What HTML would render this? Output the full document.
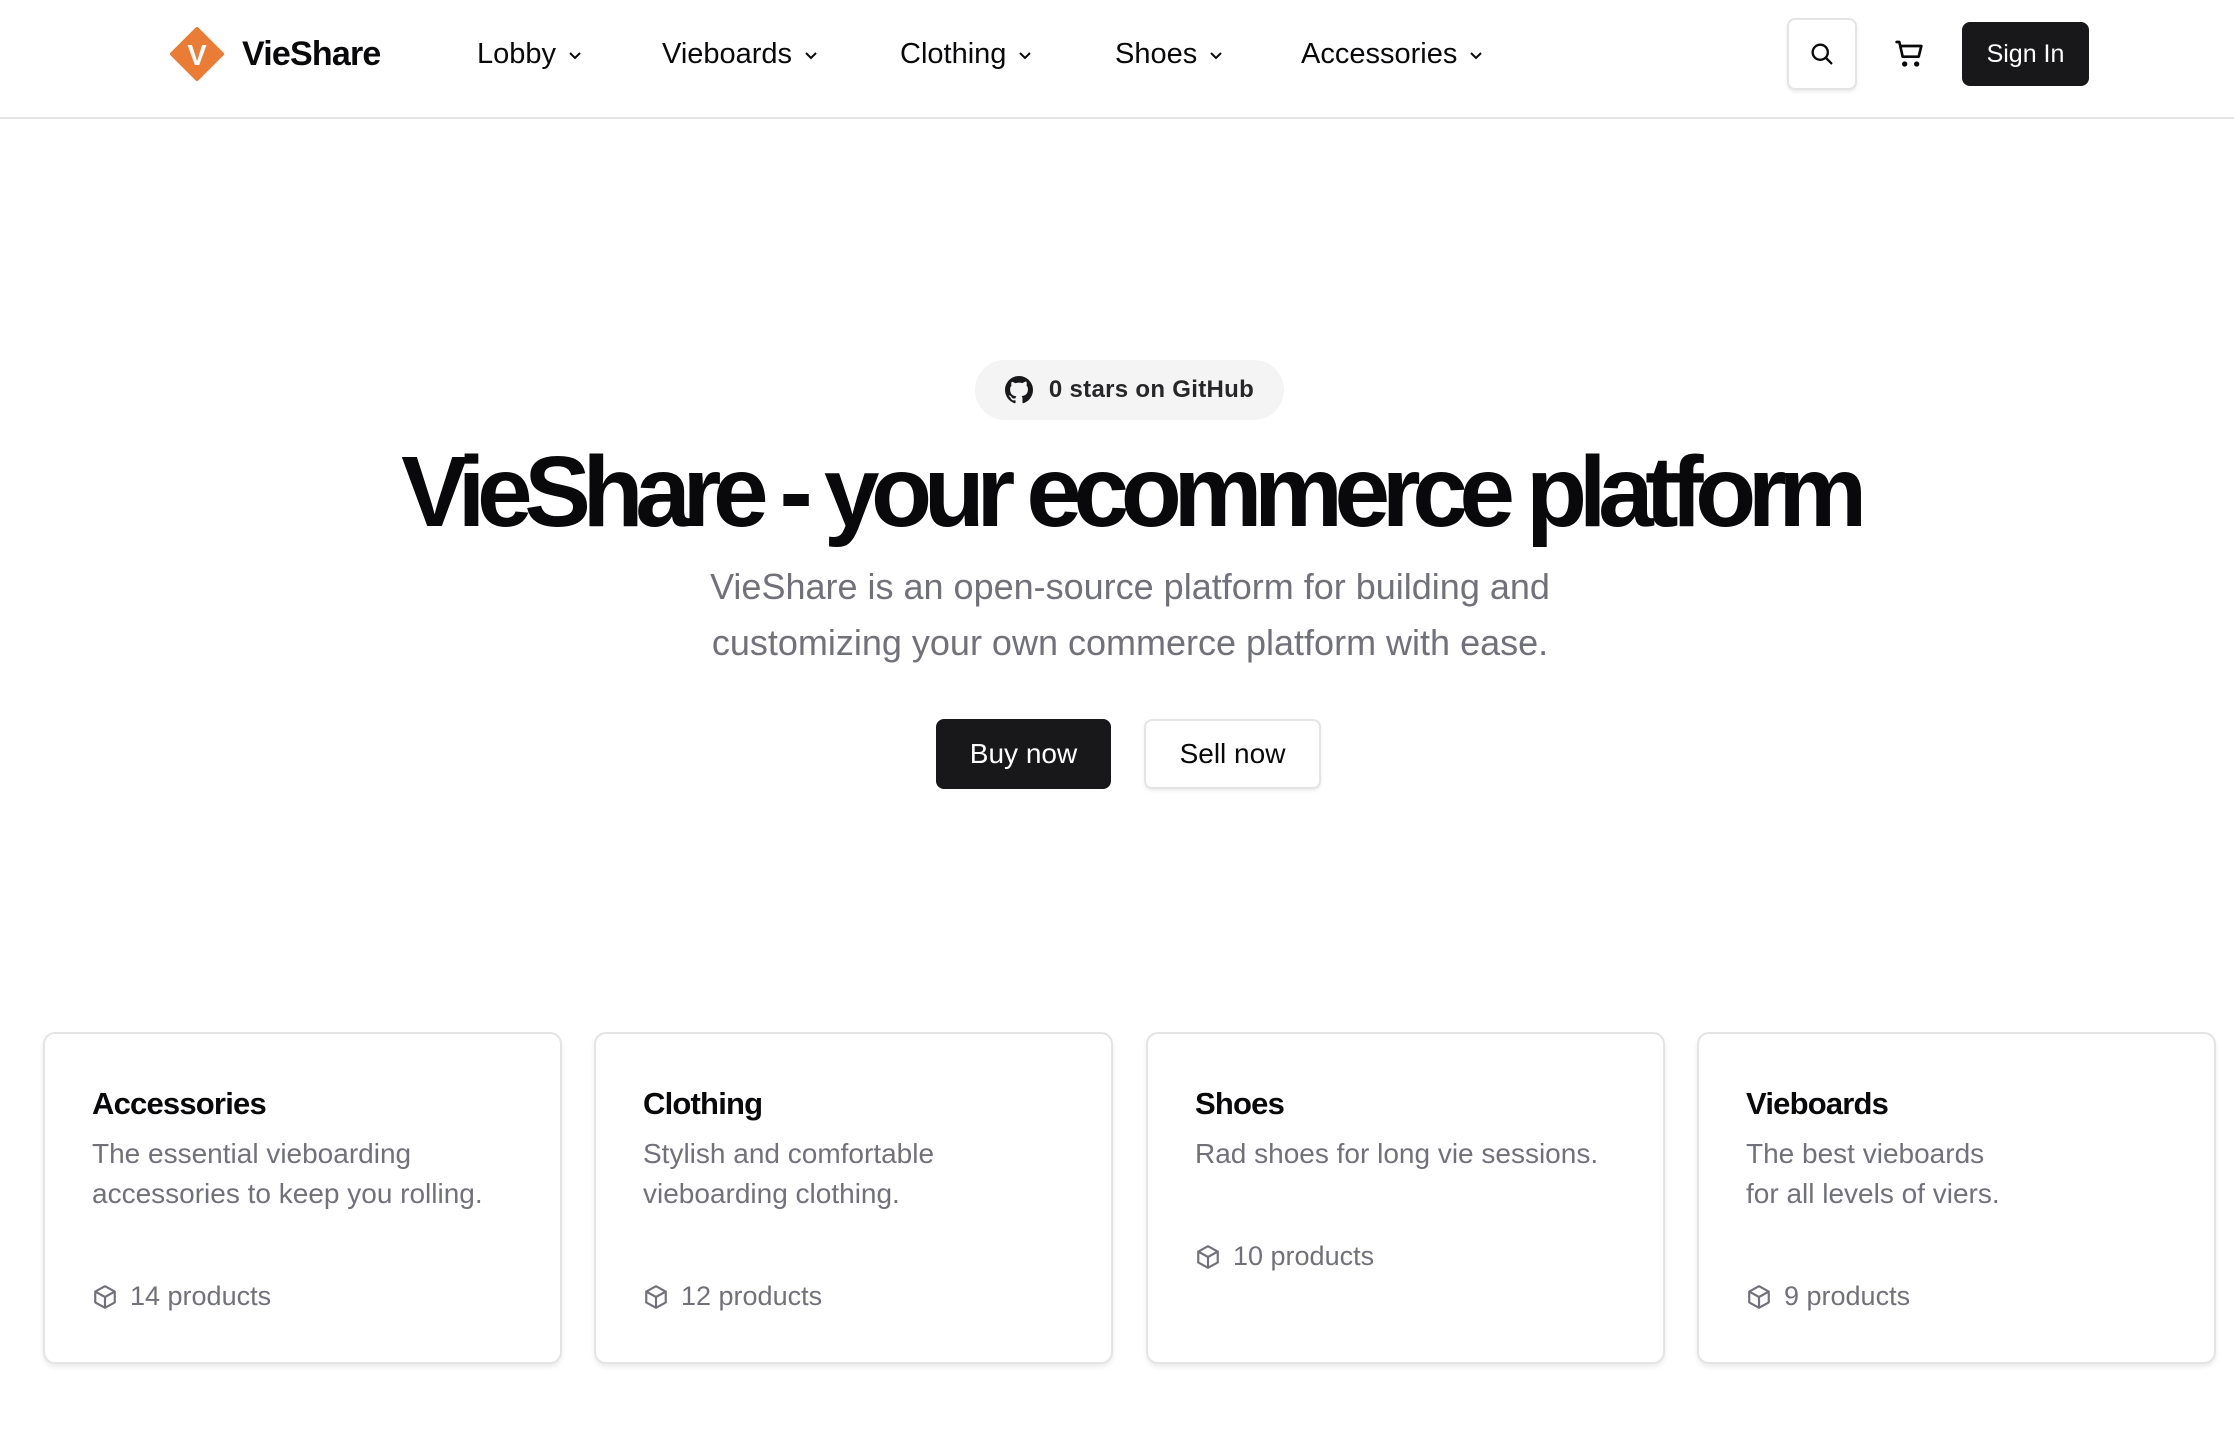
<!DOCTYPE html>
<html><head><meta charset="utf-8"><style>
*{box-sizing:border-box;margin:0;padding:0}
html,body{width:2234px;height:1454px;overflow:hidden;background:#fff;font-family:"Liberation Sans",Arial,sans-serif;color:#09090b}
.a{position:absolute}
.nav{font-size:29px;color:#09090b;top:38px}
.nav svg{margin-left:12px;vertical-align:middle}
.card{position:absolute;top:1032px;width:519px;height:332px;border:2px solid #e4e4e7;border-radius:12px;box-shadow:0 3px 5px rgba(0,0,0,.08);background:#fff}
.card h3{position:absolute;left:47px;top:52px;font-size:31px;font-weight:600;letter-spacing:-0.8px}
.card p{position:absolute;left:47px;top:100px;font-size:28px;line-height:40px;color:#71717a;width:450px}
.card .pr{position:absolute;left:47px;font-size:27px;color:#71717a;display:flex;align-items:center}
.card .pr svg{margin-right:12px}
</style></head><body>
<div class="a" style="left:0;top:117px;width:2234px;height:2px;background:#e4e4e7"></div>
<svg class="a" style="left:170px;top:27px" width="54" height="54" viewBox="0 0 54 54"><path d="M27 2 L52 27 L27 52 L2 27 Z" fill="#ea7c35" stroke="#ea7c35" stroke-width="4" stroke-linejoin="round"/><text x="27" y="38" font-family="Liberation Sans" font-weight="700" font-size="29" fill="#fff" text-anchor="middle">V</text></svg>
<div class="a" style="left:242px;top:35px;font-size:34px;font-weight:700;letter-spacing:-0.8px">VieShare</div>
<div class="a nav" style="left:477px">Lobby<svg width="14" height="10" viewBox="0 0 14 10"><path d="M2 3l5 5 5-5" fill="none" stroke="#09090b" stroke-width="2"/></svg></div>
<div class="a nav" style="left:662px">Vieboards<svg width="14" height="10" viewBox="0 0 14 10"><path d="M2 3l5 5 5-5" fill="none" stroke="#09090b" stroke-width="2"/></svg></div>
<div class="a nav" style="left:900px">Clothing<svg width="14" height="10" viewBox="0 0 14 10"><path d="M2 3l5 5 5-5" fill="none" stroke="#09090b" stroke-width="2"/></svg></div>
<div class="a nav" style="left:1115px">Shoes<svg width="14" height="10" viewBox="0 0 14 10"><path d="M2 3l5 5 5-5" fill="none" stroke="#09090b" stroke-width="2"/></svg></div>
<div class="a nav" style="left:1301px">Accessories<svg width="14" height="10" viewBox="0 0 14 10"><path d="M2 3l5 5 5-5" fill="none" stroke="#09090b" stroke-width="2"/></svg></div>
<div class="a" style="left:1787px;top:18px;width:70px;height:72px;border:2px solid #e4e4e7;border-radius:8px;box-shadow:0 2px 3px rgba(0,0,0,.08);display:flex;align-items:center;justify-content:center"><svg width="28" height="28" viewBox="0 0 24 24" fill="none" stroke="#09090b" stroke-width="2" stroke-linecap="round"><circle cx="10.5" cy="10.5" r="6.5"/><path d="M15.5 15.5L20 20"/></svg></div>
<svg class="a" style="left:1894px;top:38px" width="32" height="32" viewBox="0 0 24 24" fill="none" stroke="#09090b" stroke-width="2" stroke-linecap="round" stroke-linejoin="round"><path d="M2 3h2l2.5 11h12l2-8H5.5"/><circle cx="8" cy="19.5" r="1"/><circle cx="17" cy="19.5" r="1"/></svg>
<div class="a" style="left:1962px;top:22px;width:127px;height:64px;background:#18181b;border-radius:8px;color:#fff;font-size:25px;display:flex;align-items:center;justify-content:center">Sign In</div>

<div class="a" style="left:975px;top:360px;width:309px;height:60px;background:#f4f4f5;border-radius:30px;display:flex;align-items:center;justify-content:center;font-size:24px;font-weight:700;color:#27272a;letter-spacing:0.3px">
<svg width="28" height="28" viewBox="0 0 16 16" style="margin-right:16px"><path fill="#18181b" d="M8 0C3.580 0 0 3.58 0 8c0 3.54 2.29 6.530 5.47 7.59.4.07.55-.17.55-.38v-1.34c-2.23.48-2.7-1.07-2.7-1.07-.36-.92-.89-1.17-.89-1.17-.73-.5.06-.49.06-.49.8.06 1.23.83 1.23.83.71 1.22 1.87.87 2.33.66.07-.52.28-.87.5-1.07-1.78-.2-3.64-.89-3.64-3.95 0-.87.31-1.59.82-2.15-.08-.2-.36-1.02.08-2.12 0 0 .67-.21 2.2.82A7.6 7.6 0 0 1 8 3.8c.68 0 1.36.09 2 .27 1.53-1.040 2.2-.82 2.2-.82.44 1.1.16 1.92.08 2.12.51.56.82 1.27.82 2.15 0 3.07-1.870 3.75-3.65 3.95.29.25.54.73.54 1.48v2.2c0 .21.15.46.55.38A8 8 0 0 0 16 8c0-4.42-3.58-8-8-8z"/></svg>0 stars on GitHub</div>
<div class="a" style="left:0;width:2260px;top:432px;text-align:center;font-size:100px;font-weight:700;letter-spacing:-8.4px;line-height:120px">VieShare - your ecommerce platform</div>
<div class="a" style="left:0;width:2260px;top:559px;text-align:center;font-size:36px;line-height:56px;color:#71717a">VieShare is an open-source platform for building and<br>customizing your own commerce platform with ease.</div>
<div class="a" style="left:936px;top:719px;width:175px;height:70px;background:#18181b;color:#fff;border-radius:8px;font-size:28px;display:flex;align-items:center;justify-content:center">Buy now</div>
<div class="a" style="left:1144px;top:719px;width:177px;height:70px;border:2px solid #e4e4e7;box-shadow:0 2px 3px rgba(0,0,0,.08);border-radius:8px;font-size:28px;display:flex;align-items:center;justify-content:center">Sell now</div>

<div class="card" style="left:43px"><h3>Accessories</h3><p>The essential vieboarding accessories to keep you rolling.</p><div class="pr" style="top:247px"><svg width="26" height="26" viewBox="0 0 24 24" fill="none" stroke="#71717a" stroke-width="2" stroke-linejoin="round"><path d="M12 2l9 5v10l-9 5-9-5V7z"/><path d="M3 7l9 5 9-5M12 12v10"/></svg>14 products</div></div>
<div class="card" style="left:594px"><h3>Clothing</h3><p>Stylish and comfortable<br>vieboarding clothing.</p><div class="pr" style="top:247px"><svg width="26" height="26" viewBox="0 0 24 24" fill="none" stroke="#71717a" stroke-width="2" stroke-linejoin="round"><path d="M12 2l9 5v10l-9 5-9-5V7z"/><path d="M3 7l9 5 9-5M12 12v10"/></svg>12 products</div></div>
<div class="card" style="left:1146px"><h3>Shoes</h3><p>Rad shoes for long vie sessions.</p><div class="pr" style="top:207px"><svg width="26" height="26" viewBox="0 0 24 24" fill="none" stroke="#71717a" stroke-width="2" stroke-linejoin="round"><path d="M12 2l9 5v10l-9 5-9-5V7z"/><path d="M3 7l9 5 9-5M12 12v10"/></svg>10 products</div></div>
<div class="card" style="left:1697px"><h3>Vieboards</h3><p>The best vieboards<br>for all levels of viers.</p><div class="pr" style="top:247px"><svg width="26" height="26" viewBox="0 0 24 24" fill="none" stroke="#71717a" stroke-width="2" stroke-linejoin="round"><path d="M12 2l9 5v10l-9 5-9-5V7z"/><path d="M3 7l9 5 9-5M12 12v10"/></svg>9 products</div></div>
</body></html>
